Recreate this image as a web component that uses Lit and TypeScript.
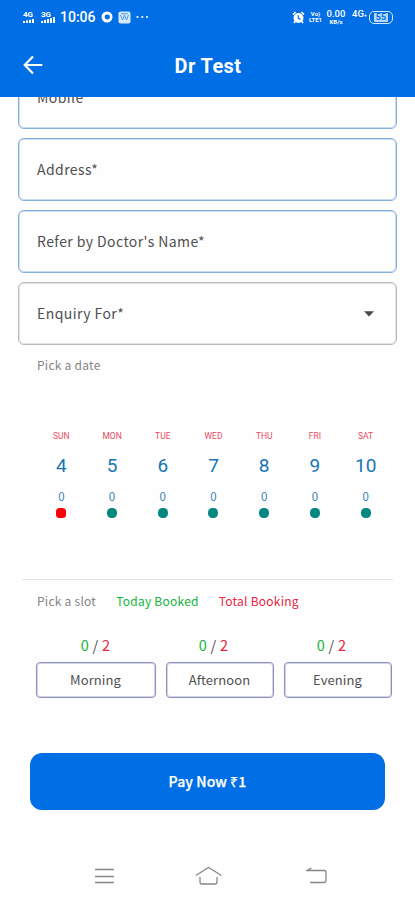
import { LitElement, html, css, svg } from "lit";
import { customElement } from "lit/decorators.js";
import { classMap } from "lit/directives/class-map.js";

const signalBars = (x: number, n: number, max: number) =>
  Array.from({ length: n }, (_, i) => {
    const h = 2 + ((max - 2) * i) / (n - 1);
    return svg`<rect x=${x + i * 3} y=${13 - h} width="2" height=${h} />`;
  });

@customElement("status-bar")
export class StatusBar extends LitElement {
  static styles = css`
    :host { display: flex; align-items: center; justify-content: space-between; height: 34px; padding: 0 22px 0 22px; color: #fff; font-family: Roboto, sans-serif; }
    .group { display: flex; align-items: center; }
    svg { display: block; fill: #fff; }
    .net { width: 14px; height: 14px; }
    .net + .net { margin-left: 5px; }
    .net text { font: 700 8px Roboto, sans-serif; }
    .time { font-size: 14px; font-weight: 500; width: 35px; margin-left: 5px; line-height: 16px; white-space: nowrap; }
    .circle { margin-left: 6px; }
    .app { margin-left: 5px; }
    .dots { margin-left: 5px; }
    .alarm { margin-right: 4px; }
    .volte, .speed { display: flex; flex-direction: column; align-items: center; font-weight: 700; line-height: 6px; }
    .volte { font-size: 6px; width: 13px; margin-right: 4px; }
    .speed { width: 20px; margin-right: 6px; font-size: 6px; line-height: 7px; margin-top: -1px; }
    .speed b { font-size: 9.5px; font-weight: 500; line-height: 9px; }
    .gen { font-size: 9.5px; font-weight: 500; width: 15px; margin-right: 2px; line-height: 12px; white-space: nowrap; margin-top: -5px; }
    .gen small { font-size: 5px; }
    .battery { box-sizing: border-box; width: 24px; height: 13px; border: 1px solid #d6e9ff; border-radius: 5px; padding: 1px 4px; }
    .level { background: #b6d8fc; color: #006ee5; font-size: 9px; line-height: 9px; height: 9px; font-weight: 700; text-align: center; border-radius: 1px; }
  `;
  render() {
    return html`
      <div class="group">
        <svg class="net" viewBox="0 0 14 14"><text x="1" y="7">4G</text>${signalBars(1, 4, 4)}</svg>
        <svg class="net" viewBox="0 0 14 14"><text x="0" y="7">3G</text>${signalBars(0, 5, 6)}</svg>
        <span class="time">10:06</span>
        <svg class="circle" width="12" height="12" viewBox="0 0 12 12">
          <path fill-rule="evenodd" d="M6 .5a5.5 5.5 0 1 0 0 11a5.5 5.5 0 1 0 0-11M6.3 3.6a2.6 2.4 0 1 1 0 4.8a2.6 2.4 0 1 1 0-4.8"/>
        </svg>
        <svg class="app" width="13" height="13" viewBox="0 0 13 13">
          <rect x=".5" y=".5" width="12" height="12" rx="2" fill="#d7eafd"/>
          <path d="M2.5 4l2 5 2-5 2 5 2-5M3 2.8h7" fill="none" stroke="#4b98ea" stroke-width="1"/>
        </svg>
        <svg class="dots" width="13" height="4" viewBox="0 0 13 4"><circle cx="1.5" cy="2" r="1.1"/><circle cx="6.3" cy="2" r="1.1"/><circle cx="11" cy="2" r="1.1"/></svg>
      </div>
      <div class="group">
        <svg class="alarm" width="13" height="13" viewBox="0 0 13 13">
          <path d="M1 3.5L3.6 1M12 3.5L9.4 1M3 10.5l-1 1.5M10 10.5l1 1.5" stroke="#fff" stroke-width="1.7"/>
          <circle cx="6.5" cy="7" r="5"/><path d="M6.3 4.2v3.2l2.2 1" fill="none" stroke="#0070e4" stroke-width="1.2"/>
        </svg>
        <div class="volte"><span>Vo)</span><span>LTE1</span></div>
        <div class="speed"><b>0.00</b><span>KB/s</span></div>
        <span class="gen">4G<small>+</small></span>
        <div class="battery"><div class="level">55</div></div>
      </div>`;
  }
}

@customElement("form-field")
export class FormField extends LitElement {
  static properties = { label: {}, kind: {} };
  declare label: string;
  declare kind: string;
  static styles = css`
    :host { display: block; }
    .box { box-sizing: border-box; height: 63px; border: 1px solid #84afdf; box-shadow: inset 0 0 0 1px #cadcf1; border-radius: 6px; padding: 0 22px 0 18px; display: flex; align-items: center; justify-content: space-between; font: 400 14px "Noto Sans CJK SC", sans-serif; color: #505050; letter-spacing: 0.42px; line-height: 20px; }
    .select { border-color: #bababc; box-shadow: inset 0 0 0 1px #e4e4e6; }
    span { margin-top: -1px; }
    svg { display: block; }
  `;
  render() {
    const select = this.kind === "select";
    return html`<div class=${classMap({ box: true, select })}>
      <span>${this.label}</span>
      ${select ? html`<svg width="10" height="6" viewBox="0 0 10 6"><path d="M0 .3h10L5 5.6z" fill="#484848"/></svg>` : ""}
    </div>`;
  }
}

const days = [["SUN", "4"], ["MON", "5"], ["TUE", "6"], ["WED", "7"], ["THU", "8"], ["FRI", "9"], ["SAT", "10"]];

@customElement("app-root")
export class AppRoot extends LitElement {
  static styles = css`
    :host { display: flex; flex-direction: column; height: 900px; overflow: hidden; background: #fefefe; font-family: "Noto Sans CJK SC", sans-serif; color: #505050; }
    .header { flex: none; height: 97px; background: #006ee5; }
    .bar { display: grid; grid-template-columns: 60px 1fr 60px; height: 63px; align-items: center; color: #fff; }
    .back { margin: 0 0 1px 23px; display: block; }
    .title { margin: 0 0 0 1px; font: 700 20px/24px Roboto, sans-serif; text-align: center; letter-spacing: 0.4px; }
    .scroll { flex: none; height: 763px; overflow: hidden; }
    .fields { display: flex; flex-direction: column; gap: 9px; margin: -31px 18px 0 18px; }
    .caption { font-size: 12px; line-height: 18px; color: #858585; letter-spacing: 0.25px; }
    .date { margin: 11px 0 0 37px; }
    .week { display: grid; grid-template-columns: repeat(7, 1fr); margin: 56px 24px 0 36px; }
    .day { display: flex; flex-direction: column; align-items: center; font-family: Roboto, sans-serif; }
    .name { font-size: 8.5px; line-height: 12px; color: #e94b62; }
    .num { font-size: 19px; line-height: 24px; margin-top: 12px; color: #1677b3; }
    .count { font: 400 11.5px/16px "Noto Sans CJK SC", sans-serif; margin-top: 10px; color: #3580b0; }
    .dot { width: 10px; height: 10px; border-radius: 4.5px; margin-top: 4px; background: #04877f; }
    .today { background: #fb0007; border-radius: 3.5px; }
    .rule { height: 1px; margin: 61px 22px 0; background: #e6e6e6; }
    .legend { display: flex; margin: 12px 0 0 37px; gap: 20px; }
    .green { color: #14b53a; }
    .red { color: #e9243f; }
    .slots { display: grid; grid-template-columns: 120px 108px 108px; gap: 10px; margin: 25px 0 0 35.5px; }
    .slot { text-align: center; }
    .ratio { font-size: 14.5px; line-height: 20px; letter-spacing: 0.2px; }
    .slot:nth-child(n + 2) .ratio { padding-right: 12px; }
    .choice { box-sizing: border-box; height: 36px; margin-top: 7px; border: 1px solid #9090be; box-shadow: inset 0 0 0 1px #d5d5e8; border-radius: 4px; font-size: 13px; line-height: 34px; letter-spacing: 0.1px; }
    .pay { margin: 55px 30px 0; height: 57px; border-radius: 12px; background: #006ee5; color: #fff; text-align: center; font-weight: 500; font-size: 14px; line-height: 56px; -webkit-text-stroke: 0.25px #fff; letter-spacing: 0.1px; }
    .nav { display: grid; grid-template-columns: repeat(3, 28px); column-gap: 76px; padding: 5px 0 0 91px; }
    .nav svg { display: block; fill: none; stroke: #888; stroke-width: 1.3; }
    .nav svg:last-child { margin-left: 7px; }
  `;
  render() {
    const slot = (name: string) => html`<div class="slot">
      <div class="ratio"><span class="green">0</span> / <span class="red">2</span></div>
      <div class="choice">${name}</div>
    </div>`;
    return html`
      <header class="header">
        <status-bar></status-bar>
        <div class="bar">
          <svg class="back" width="20" height="20" viewBox="0 0 20 20"><path d="M19.3 10H2M10 1.5L1.7 10l8.3 8.5" fill="none" stroke="#fff" stroke-width="2.2"/></svg>
          <h1 class="title">Dr Test</h1>
        </div>
      </header>
      <main class="scroll">
        <div class="fields">
          <form-field label="Mobile"></form-field>
          <form-field label="Address*"></form-field>
          <form-field label="Refer by Doctor's Name*"></form-field>
          <form-field label="Enquiry For*" kind="select"></form-field>
        </div>
        <div class="caption date">Pick a date</div>
        <div class="week">
          ${days.map(([name, num], i) => html`<div class="day">
            <span class="name">${name}</span><span class="num">${num}</span><span class="count">0</span>
            <span class=${classMap({ dot: true, today: i === 0 })}></span>
          </div>`)}
        </div>
        <div class="rule"></div>
        <div class="legend caption"><span>Pick a slot</span><span class="green">Today Booked</span><span class="red">Total Booking</span></div>
        <div class="slots">${["Morning", "Afternoon", "Evening"].map(slot)}</div>
        <div class="pay">Pay Now ₹1</div>
      </main>
      <nav class="nav">
        <svg width="28" height="22" viewBox="0 0 28 22"><path d="M4 4.5h19M4 11.5h19M4 17.5h19"/></svg>
        <svg width="28" height="22" viewBox="0 0 28 22"><path d="M.8 10.5L13.5 2.5l13 8M5 12v5q0 2 2 2h13q2 0 2-2v-5"/></svg>
        <svg width="28" height="22" viewBox="0 0 28 22"><path d="M2 5.5h16q2 0 2 2v8q0 2-2 2H4M5.5 3L1 5.5h5"/></svg>
      </nav>`;
  }
}
